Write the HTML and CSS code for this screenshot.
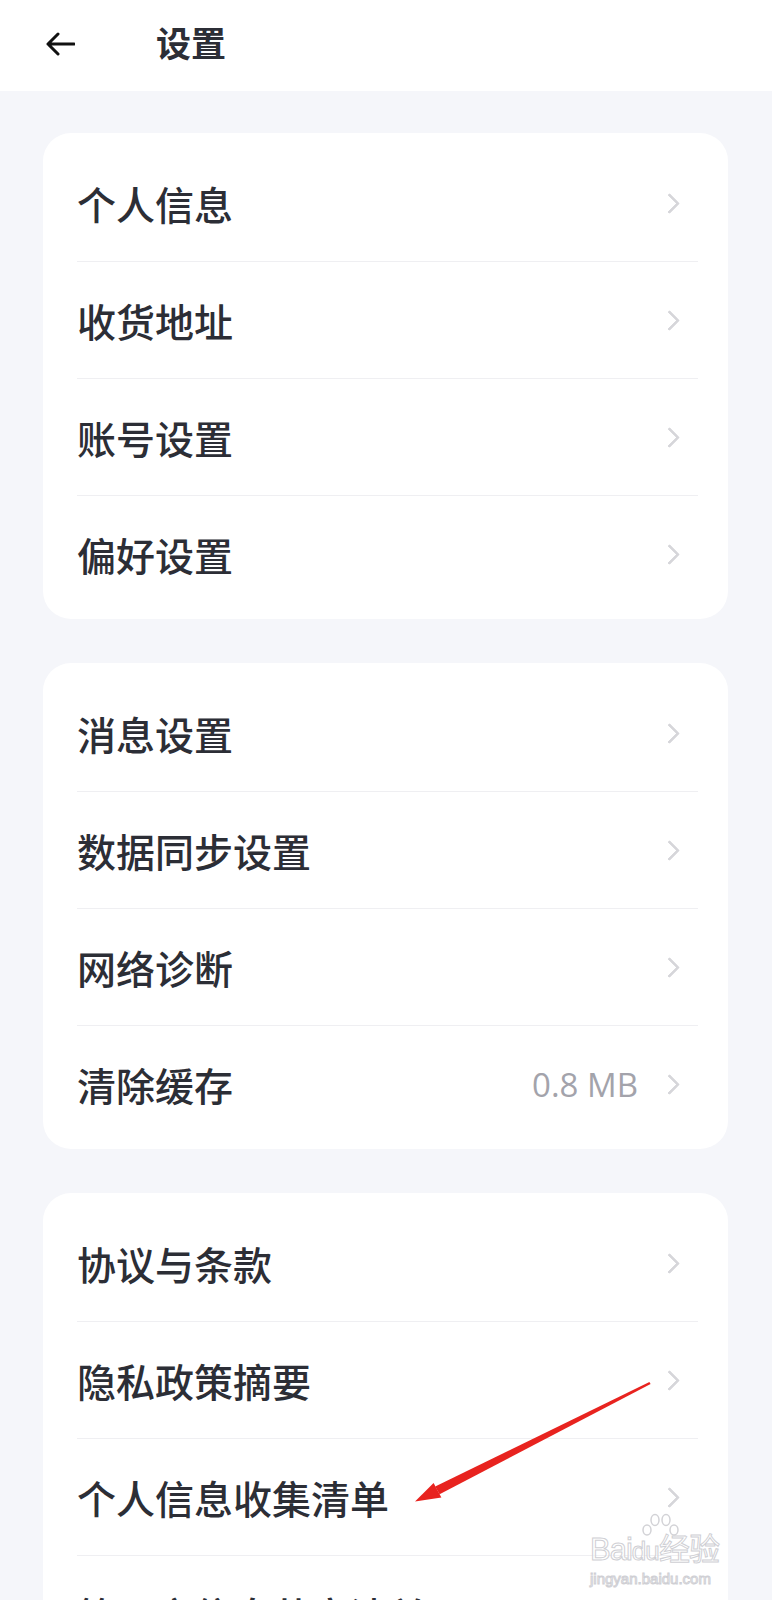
FILE: index.html
```html
<!DOCTYPE html>
<html lang="zh-CN">

<head>
    <meta charset="UTF-8">
    <meta name="viewport" content="width=device-width, initial-scale=1.0">
    <title>设置</title>
    <link rel="stylesheet" href="styles.css">
</head>

<body>

    <div class="header">
        <svg class="back" width="30" height="24" viewBox="0 0 30 24">
            <path d="M29 12 H3 M13 2 L3 12 L13 22" fill="none" stroke="#111" stroke-width="3" stroke-linecap="round" stroke-linejoin="round"/>
        </svg>
        <h1 class="title">设置</h1>
    </div>

    <div class="page">
        <div class="card">
            <div class="row"><span class="label">个人信息</span><span class="chevron"></span></div>
            <div class="row"><span class="label">收货地址</span><span class="chevron"></span></div>
            <div class="row"><span class="label">账号设置</span><span class="chevron"></span></div>
            <div class="row"><span class="label">偏好设置</span><span class="chevron"></span></div>
        </div>

        <div class="card">
            <div class="row"><span class="label">消息设置</span><span class="chevron"></span></div>
            <div class="row"><span class="label">数据同步设置</span><span class="chevron"></span></div>
            <div class="row"><span class="label">网络诊断</span><span class="chevron"></span></div>
            <div class="row"><span class="label">清除缓存</span><span class="value">0.8 MB</span><span class="chevron"></span></div>
        </div>

        <div class="card">
            <div class="row"><span class="label">协议与条款</span><span class="chevron"></span></div>
            <div class="row"><span class="label">隐私政策摘要</span><span class="chevron"></span></div>
            <div class="row"><span class="label">个人信息收集清单</span><span class="chevron"></span></div>
            <div class="row"><span class="label">第三方信息共享清单</span><span class="chevron"></span></div>
        </div>
    </div>

    <!-- red annotation arrow drawn over the list -->
    <svg class="annotation" width="772" height="1600" viewBox="0 0 772 1600">
        <polygon points="650.6,1383.9 649.4,1382.1 435.2,1486.6 439.6,1494.2" fill="#e8231f"/>
        <polygon points="415,1501.5 433.6,1483 441.4,1497.6" fill="#e8231f"/>
    </svg>

    <!-- watermark -->
    <div class="watermark">
        <svg class="paw" width="44" height="40" viewBox="0 0 44 40">
            <g fill="none" stroke="#d2d2d6" stroke-width="1.5">
                <ellipse cx="9" cy="18" rx="4" ry="5"/>
                <ellipse cx="17" cy="8" rx="4" ry="5.5"/>
                <ellipse cx="28" cy="8" rx="4" ry="5.5"/>
                <ellipse cx="36" cy="18" rx="4" ry="5"/>
            </g>
        </svg>
        <div class="wm-logo">Bai<span class="wm-du">du</span>经验</div>
        <div class="wm-url">jingyan.baidu.com</div>
    </div>

</body>

</html>
```

FILE: styles.css
```css
body {
    margin: 0;
    position: relative;
    background-color: #f5f6fa;
    font-family: "Noto Sans CJK SC", "Noto Sans", sans-serif;
    color: #2c2e36;
}

.header {
    height: 91px;
    background-color: #fff;
    display: flex;
    align-items: center;
    padding-left: 45px;
}

.back {
    margin-top: -4px;
}

.title {
    margin: 0 0 0 81px;
    font-size: 35px;
    font-weight: 600;
    line-height: 1;
    margin-top: -8px;
    color: #2c2e36;
}

.page {
    padding: 42px 44px 0 43px;
}

.card {
    background-color: #fff;
    border-radius: 28px;
    padding: 12px 30px 7px 34px;
    margin-bottom: 44px;
}

.row {
    height: 116px;
    display: flex;
    align-items: center;
    border-bottom: 1px solid #efeff2;
}

.row:last-child {
    border-bottom: none;
}

.label {
    flex: 1;
    font-size: 39px;
    font-weight: 500;
    line-height: 1;
}

.value {
    font-family: "Open Sans", "Noto Sans", sans-serif;
    font-size: 33px;
    color: #a3a3ab;
    margin-right: 24px;
}

/* chevron made from two borders */
.chevron {
    width: 12px;
    height: 12px;
    border-top: 3.5px solid #d6d6da;
    border-right: 3.5px solid #d6d6da;
    border-radius: 2px;
    transform: rotate(45deg);
    margin-right: 21px;
}

.annotation {
    position: absolute;
    top: 0;
    left: 0;
    pointer-events: none;
}

.watermark {
    position: absolute;
    left: 590px;
    top: 1512px;
    width: 140px;
    font-family: "Liberation Sans", sans-serif;
    color: rgba(255, 255, 255, 0.6);
    -webkit-text-stroke: 1px #cfcfd4;
}

.paw {
    position: absolute;
    left: 48px;
    top: 0;
}

.wm-logo {
    margin-top: 22px;
    font-size: 31px;
    line-height: 1;
    letter-spacing: -1px;
}

.wm-du {
    font-size: 26px;
}

.wm-url {
    margin-top: 6px;
    font-size: 15px;
    line-height: 1;
}
```
